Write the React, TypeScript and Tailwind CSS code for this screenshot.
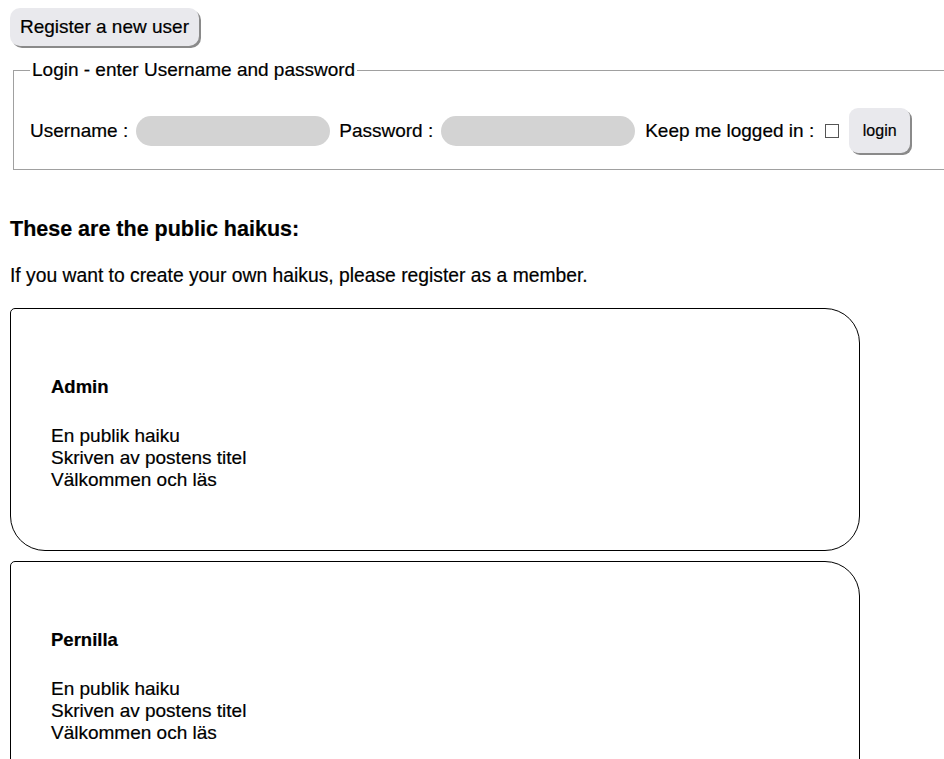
import React from "react";

const haikus = [
  { author: "Admin", lines: ["En publik haiku", "Skriven av postens titel", "Välkommen och läs"] },
  { author: "Pernilla", lines: ["En publik haiku", "Skriven av postens titel", "Välkommen och läs"] },
];

export default function App() {
  return (
    <div className="w-[944px] h-[759px] overflow-hidden bg-white text-black font-['Liberation_Sans',Arial,sans-serif] [-webkit-text-stroke:0.2px_black]">
      <div className="pt-[8px] pl-[10px]">
        <button className="h-[38px] px-[10px] rounded-[10px] bg-[#e9e9ed] shadow-[2px_2px_0_#8a8a8a] text-[19px] leading-[22px] text-black">
          Register a new user
        </button>
      </div>

      <fieldset className="mt-[13px] ml-[13px] mr-[-20px] border border-[#a0a0a0] px-[16px] pt-[27px] pb-[16px]">
        <legend className="px-[2px] text-[19px] leading-[22px]">Login - enter Username and password</legend>
        <div className="flex items-center text-[19px] leading-[22px]">
          <span>Username :</span>
          <span className="ml-[8px] w-[194px] h-[30px] rounded-full bg-[#d3d3d3]" />
          <span className="ml-[9px]">Password :</span>
          <span className="ml-[8px] w-[194px] h-[30px] rounded-full bg-[#d3d3d3]" />
          <span className="ml-[10px]">Keep me logged in :</span>
          <span className="ml-[11px] w-[14px] h-[14px] border border-[#555] bg-white" />
          <button className="ml-[10px] w-[61px] h-[45px] rounded-[9px] bg-[#e9e9ed] shadow-[2px_2px_0_#8a8a8a] text-[16px] leading-[18px] text-black">
            login
          </button>
        </div>
      </fieldset>

      <h2 className="mt-[46px] ml-[10px] text-[21.5px] leading-[26px] font-bold">These are the public haikus:</h2>
      <p className="mt-[23px] ml-[10px] text-[19.3px] leading-[22px]">
        If you want to create your own haikus, please register as a member.
      </p>

      <div className="mt-[21px] ml-[10px] flex flex-col gap-[10px]">
        {haikus.map((h, i) => (
          <div
            key={i}
            className="w-[850px] h-[243px] shrink-0 border border-black rounded-tl-[5px] rounded-tr-[35px] rounded-br-[35px] rounded-bl-[35px] pl-[40px] pt-[67px] text-[19px] leading-[22px]"
          >
            <div className="font-bold text-[18.5px]">{h.author}</div>
            <div className="mt-[27px]">
              {h.lines.map((l, j) => (
                <div key={j}>{l}</div>
              ))}
            </div>
          </div>
        ))}
      </div>
    </div>
  );
}
